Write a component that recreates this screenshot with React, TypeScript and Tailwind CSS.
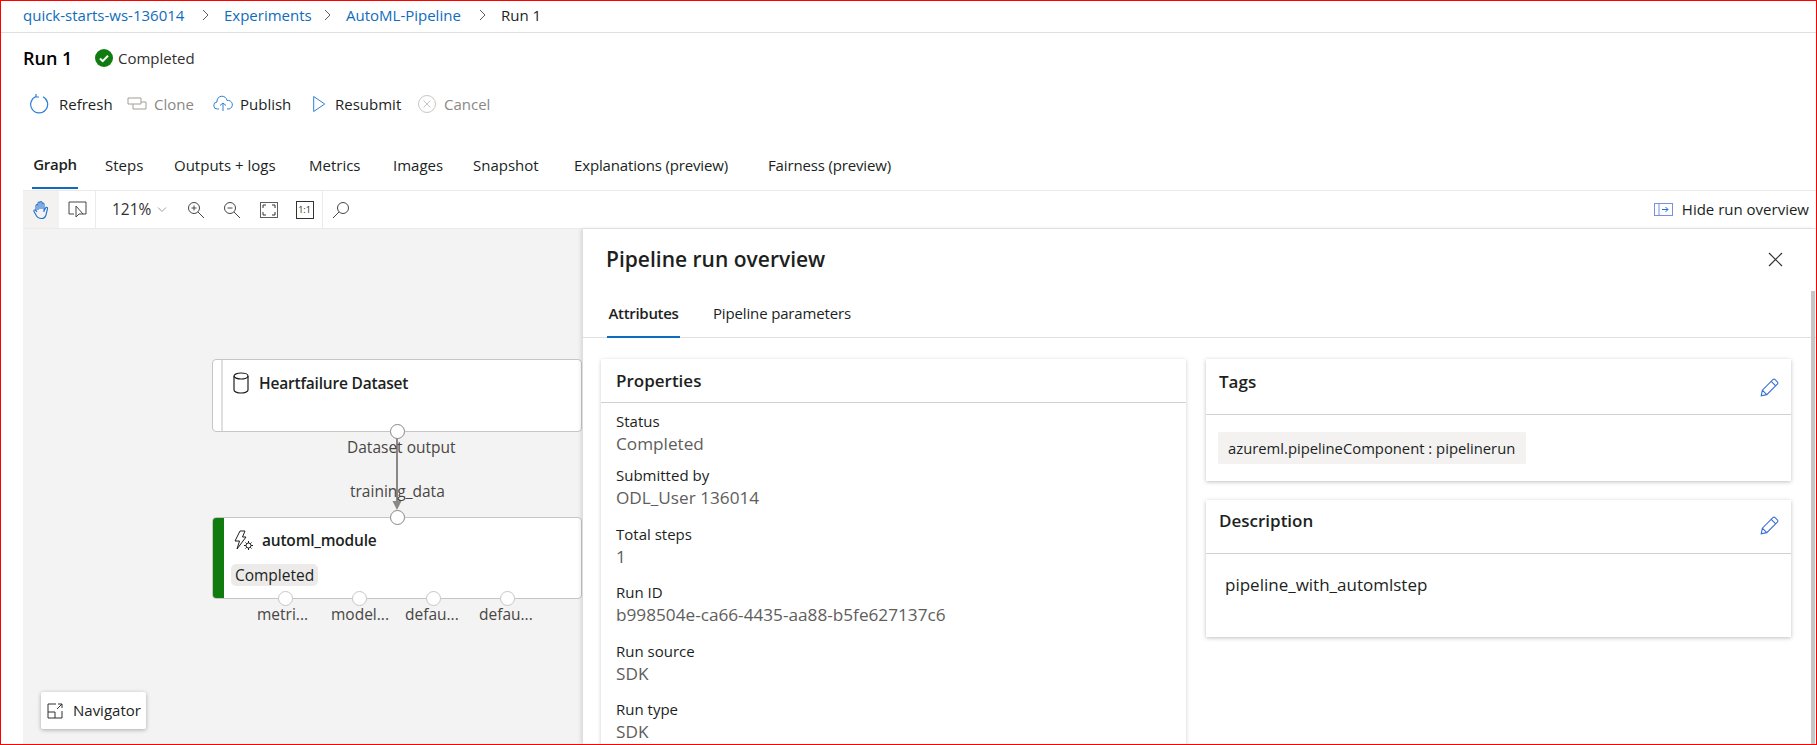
import React from "react";

const S = ({ w = 20, h = 20, vb = "0 0 20 20", c = "#0f6cbd", sw = 1, children, className = "" }: any) => (
  <svg width={w} height={h} viewBox={vb} fill="none" stroke={c} strokeWidth={sw} className={"shrink-0 " + className}>
    {children}
  </svg>
);

const Action = ({ icon, label, muted, gap, w }: any) => (
  <div className="flex items-center" style={{ width: w }}>
    <div className="w-[20px] flex justify-center">{icon}</div>
    <span style={{ marginLeft: gap }} className={"text-[15px] " + (muted ? "text-[#8a8886]" : "text-[#201f1e]")}>{label}</span>
  </div>
);

const Field = ({ label, value, first }: any) => (
  <div className={(first ? "h-[54px]" : "h-[58.5px]") + " flex flex-col"}>
    <div className="text-[15px] leading-[20px] font-medium text-[#201f1e]">{label}</div>
    <div className="mt-[1px] text-[17.2px] leading-[23px] text-[#605e5c]">{value}</div>
  </div>
);

const Pencil = () => (
  <S w={20} h={20} vb="0 0 18 18" c="#3a6fd8">
    <path d="M2 16l1-5L12.500 1.500a1.500 1.500 0 0 1 2 0l2 2a1.500 1.500 0 0 1 0 2L7 15l-5 1zM3 11l4 4M11 3l4 4" />
  </S>
);

const Port = ({ x, y, c = "#8a8886" }: any) => (
  <div
    className="absolute w-[15px] h-[15px] rounded-full bg-white border-[1.5px]"
    style={{ left: x - 7.5, top: y - 7.5, borderColor: c }}
  />
);

const OutLabel = ({ x, text }: any) => (
  <div className="absolute top-[376px] text-[15.5px] leading-[18px] text-[#484644]" style={{ left: x }}>
    {text}
  </div>
);

const Chevron = () => (
  <span className="w-[39px] flex justify-center">
    <S w={10} h={12} vb="0 0 10 12" c="#605e5c"><path d="M3 1l5 5-5 5" /></S>
  </span>
);

export default function App() {
  return (
    <div className="w-[1817px] h-[745px] overflow-hidden border border-[#ff0000] bg-white font-['Open_Sans',sans-serif] text-[#201f1e] flex flex-col relative">
      {/* breadcrumb */}
      <div className="h-[32px] shrink-0 border-b border-[#e1dfdd] pl-[22px] flex items-center text-[15px] leading-none pb-[3px] whitespace-nowrap">
        <span className="text-[#0f6cbd] w-[162px]">quick-starts-ws-136014</span>
        <Chevron />
        <span className="text-[#0f6cbd] w-[83px]">Experiments</span>
        <Chevron />
        <span className="text-[#0f6cbd] w-[116px]">AutoML-Pipeline</span>
        <Chevron />
        <span>Run 1</span>
      </div>

      {/* title */}
      <div className="h-[50px] shrink-0 pl-[22px] flex items-center">
        <span className="text-[18px] font-semibold text-black w-[72px]">Run 1</span>
        <svg width="18" height="18" viewBox="0 0 18 18" className="shrink-0">
          <circle cx="9" cy="9" r="9" fill="#107c10" />
          <path d="M5 9.500l2.700 2.700L13 6.800" fill="none" stroke="#fff" strokeWidth="2" />
        </svg>
        <span className="ml-[5px] text-[15px] text-[#323130]">Completed</span>
      </div>

      {/* actions */}
      <div className="h-[42px] shrink-0 pl-[29px] flex items-center">
        <Action
          w={97}
          gap={9}
          label="Refresh"
          icon={
            <S w={20} h={22} vb="0 0 20 22" c="#2f7fd8" sw={1.2}>
              <path d="M6 3.500a8.500 8.500 0 1 0 7 .3M6 1v3h3" />
            </S>
          }
        />
        <Action
          w={86}
          gap={7}
          muted
          label="Clone"
          icon={
            <S w={20} h={14} vb="0 0 20 14" c="#a19f9d">
              <path d="M1 1h13v6H1zM6 7v5h13V5h-5" />
            </S>
          }
        />
        <Action
          w={98}
          gap={7}
          label="Publish"
          icon={
            <S w={20} h={18} vb="0 0 20 18" c="#2f7fd8">
              <path d="M6 14H4.500a3.500 3.500 0 0 1-.5-7A5 5 0 0 1 14 5.500a4 4 0 0 1 2 8.500h-2M10 16V8M7 10.500L10 8l3 2.500" />
            </S>
          }
        />
        <Action
          w={106}
          gap={4}
          label="Resubmit"
          icon={
            <S w={20} h={18} vb="0 0 20 18" c="#2f7fd8">
              <path d="M2.700 1.500v15L13.700 9z" />
            </S>
          }
        />
        <Action
          gap={7}
          label="Cancel"
          muted
          icon={
            <S w={20} h={20} vb="0 0 20 20" c="#c8c6c4">
              <circle cx="10" cy="10" r="8.500" />
              <path d="M6.500 6.500l7 7M13.500 6.500l-7 7" />
            </S>
          }
        />
      </div>

      {/* tabs */}
      <div className="h-[64px] shrink-0 flex items-end pl-[31px] text-[15px] whitespace-nowrap">
        <div className="h-[44px] pb-[4px] w-[46px] border-b-2 border-[#0f6cbd] font-semibold flex items-center justify-center tracking-[-0.3px]">Graph</div>
        <div className="h-[44px] pb-[4px] ml-[27px] w-[40px] flex items-center">Steps</div>
        <div className="h-[44px] pb-[4px] ml-[29px] w-[106px] flex items-center">Outputs + logs</div>
        <div className="h-[44px] pb-[4px] ml-[29px] w-[54px] flex items-center">Metrics</div>
        <div className="h-[44px] pb-[4px] ml-[30px] w-[50px] flex items-center">Images</div>
        <div className="h-[44px] pb-[4px] ml-[30px] w-[66px] flex items-center">Snapshot</div>
        <div className="h-[44px] pb-[4px] ml-[35px] w-[156px] flex items-center tracking-[-0.15px]">Explanations (preview)</div>
        <div className="h-[44px] pb-[4px] ml-[38px] flex items-center tracking-[-0.15px]">Fairness (preview)</div>
      </div>

      {/* graph toolbar */}
      <div className="h-[39px] shrink-0 mt-[1px] ml-[22px] border-t border-b border-[#edebe9] flex items-center text-[15px]">
        <div className="w-[36px] h-full bg-[#f3f2f1] flex items-center justify-center">
          <S w={18} h={20} vb="0 0 18 20" c="#1f6fd0" sw={1.1}>
            <path d="M4 11V5.500a1 1 0 0 1 2 0V10M6 9V3a1 1 0 0 1 2 0v6M8 9V2.500a1 1 0 0 1 2 0V9M10 9V4a1 1 0 0 1 2 0v8M12 11l1.500-3a1 1 0 0 1 2 .6L14 15c-.6 2-2 3.500-4.500 3.500C6 18.500 5 17 4 15l-2-3.500a1 1 0 0 1 1.800-1L5 12" />
          </S>
        </div>
        <div className="w-[36px] flex justify-center">
          <S w={19} h={17} vb="0 0 19 17" c="#484644">
            <path d="M6 13H1V1h17v12h-3" />
            <path d="M8 5v11l3-3h4z" stroke="#484644" />
          </S>
        </div>
        <div className="h-full w-px bg-[#edebe9]" />
        <div className="h-full w-[66px] ml-[16px] flex items-center bg-white">
          <span className="w-[45px] text-[15.5px] text-[#323130]">121%</span>
          <S w={10} h={8} vb="0 0 10 8" c="#a19f9d"><path d="M1 1.500l4 4 4-4" /></S>
        </div>
        <div className="w-[36px] flex justify-center">
          <S w={18} h={18} vb="0 0 18 18" c="#484644">
            <circle cx="7" cy="7" r="5.500" />
            <path d="M11 11l6 6M4.500 7h5M7 4.500v5" />
          </S>
        </div>
        <div className="w-[36px] flex justify-center">
          <S w={18} h={18} vb="0 0 18 18" c="#484644">
            <circle cx="7" cy="7" r="5.500" />
            <path d="M11 11l6 6M4.500 7h5" />
          </S>
        </div>
        <div className="w-[37px] flex justify-center">
          <S w={18} h={16} vb="0 0 18 16" c="#323130">
            <rect x="0.500" y="0.500" width="17" height="15" stroke="#605e5c" />
            <path d="M3 6V3h3M12 3h3v3M15 10v3h-3M6 13H3v-3" />
          </S>
        </div>
        <div className="w-[35px] flex justify-center">
          <div className="w-[18px] h-[18px] border border-[#323130] text-[9px] leading-[16px] text-center">1:1</div>
        </div>
        <div className="h-full w-px bg-[#edebe9]" />
        <div className="ml-[9px]">
          <S w={18} h={18} vb="0 0 18 18" c="#484644">
            <circle cx="11" cy="7" r="5.500" />
            <path d="M7 11l-6 6" />
          </S>
        </div>
        <div className="ml-auto mr-[7px] flex items-center">
          <S w={19} h={13} vb="0 0 19 13" c="#7a8fe0">
            <rect x="0.500" y="0.500" width="18" height="12" />
            <path d="M5 0.500v12" />
            <path d="M8 6.500h6M11.500 4l2.500 2.500L11.500 9" stroke="#1f6fd0" />
          </S>
          <span className="ml-[9px]">Hide run overview</span>
        </div>
      </div>

      {/* body */}
      <div className="flex-1 min-h-0 flex ml-[22px]">
        {/* canvas */}
        <div className="w-[560px] shrink-0 bg-[#f3f3f3] relative overflow-hidden">
          <div className="absolute left-[189px] top-[130px] w-[370px] h-[73px] bg-white border border-[#c8c6c4] rounded-[4px] overflow-hidden flex">
            <div className="w-[10px] border-r-2 border-[#e1dfdd]" />
            <div className="ml-[9px] mt-[12px] flex items-start">
              <S w={18} h={22} vb="0 0 18 22" c="#201f1e" sw={1.2}>
                <ellipse cx="9" cy="4" rx="7" ry="3" />
                <path d="M2 4v14c0 1.600 3 3 7 3s7-1.400 7-3V4" />
              </S>
              <span className="ml-[9px] text-[15.5px] leading-[22px] font-semibold text-[#201f1e] tracking-[-0.2px]">Heartfailure Dataset</span>
            </div>
          </div>

          <svg className="absolute left-[367px] top-[202px]" width="14" height="90" viewBox="0 0 14 90" fill="none">
            <path d="M7 0v72" stroke="#8a8886" strokeWidth="2" />
            <path d="M2.500 70h9L7 79z" fill="#8a8886" />
          </svg>

          <Port x={374} y={202} />
          <div className="absolute left-[324px] top-[209px] text-[15.5px] leading-[18px] text-[#484644] whitespace-nowrap">Dataset output</div>
          <div className="absolute left-[327px] top-[253px] text-[15.5px] leading-[18px] text-[#484644] whitespace-nowrap">training_data</div>

          {/* automl node */}
          <div className="absolute left-[189px] top-[288px] w-[370px] h-[82px] bg-white border border-[#c8c6c4] rounded-[4px] overflow-hidden flex">
            <div className="w-[11px] h-full bg-[#107c10]" />
            <div className="ml-[7px] flex flex-col">
              <div className="flex items-center mt-[11px] ml-[3px]">
                <S w={19} h={21} vb="0 0 19 21" c="#201f1e">
                  <path d="M6 1h5L8.500 7H12L3 19l2.500-8H1z" />
                  <circle cx="14.500" cy="15.500" r="2.500" />
                  <path d="M14.500 11v2M14.500 18v2M10 15.500h2M17 15.500h2M11.500 12.500l1.200 1.200M16.300 17.300l1.200 1.200M17.500 12.500l-1.200 1.200M12.700 17.300l-1.200 1.200" />
                </S>
                <span className="ml-[9px] text-[15.5px] leading-[22px] font-semibold tracking-[-0.2px]">automl_module</span>
              </div>
              <div className="mt-[13px] w-[87px] h-[22px] rounded-[5px] bg-[#edebe9] text-[15.5px] leading-[22px] text-center whitespace-nowrap">Completed</div>
            </div>
          </div>
          <Port x={374} y={288} />
          <Port x={262} y={369} c="#c8c6c4" />
          <Port x={336} y={369} c="#c8c6c4" />
          <Port x={410} y={369} c="#c8c6c4" />
          <Port x={484} y={369} c="#c8c6c4" />
          <OutLabel x={234} text="metri..." />
          <OutLabel x={308} text="model..." />
          <OutLabel x={382} text="defau..." />
          <OutLabel x={456} text="defau..." />

          {/* navigator */}
          <div className="absolute left-[18px] top-[463px] w-[105px] h-[37px] bg-white rounded-[2px] shadow-[0_1px_4px_rgba(0,0,0,0.3)] flex items-center pl-[5px] text-[15px]">
            <S w={18} h={18} vb="0 0 18 18" c="#323130">
              <path d="M10 2H2v14h14V9M2 10h7v6M11 7l5-5M12 2h4v4" />
            </S>
            <span className="ml-[9px]">Navigator</span>
          </div>
        </div>

        {/* panel */}
        <div className="flex-1 min-w-0 relative overflow-hidden shadow-[-2px_0_4px_rgba(0,0,0,0.12)] bg-white">
          <div className="h-[61px] pl-[23px] pr-[33px] flex items-center justify-between">
            <span className="text-[21px] font-semibold text-[#201f1e]">Pipeline run overview</span>
            <S w={15} h={15} vb="0 0 15 15" c="#323130" sw={1.2}><path d="M1 1l13 13M14 1L1 14" /></S>
          </div>
          <div className="h-[48px] border-b border-[#e1dfdd] pl-[24px] flex items-end text-[15px]">
            <div className="h-[47px] w-[73px] -mb-px border-b-2 border-[#0f6cbd] font-semibold flex items-center justify-center tracking-[-0.3px]">Attributes</div>
            <div className="h-[47px] ml-[33px] flex items-center tracking-[-0.15px]">Pipeline parameters</div>
          </div>
          <div className="flex gap-[20px] pl-[18px] pt-[21px]">
            <div className="w-[585px] h-[480px] bg-white shadow-[0_1px_4px_rgba(0,0,0,0.2)] shrink-0">
              <div className="h-[44px] border-b border-[#d2d0ce] pl-[15px] flex items-center text-[17px] font-semibold">Properties</div>
              <div className="pl-[15px] pt-[8px]">
                <Field first label="Status" value="Completed" />
                <Field label="Submitted by" value="ODL_User 136014" />
                <Field label="Total steps" value="1" />
                <Field label="Run ID" value="b998504e-ca66-4435-aa88-b5fe627137c6" />
                <Field label="Run source" value="SDK" />
                <Field label="Run type" value="SDK" />
              </div>
            </div>
            <div className="w-[585px] shrink-0 flex flex-col gap-[19px]">
              <div className="h-[122px] bg-white shadow-[0_1px_4px_rgba(0,0,0,0.25)]">
                <div className="h-[56px] border-b border-[#d2d0ce] pl-[13px] pr-[12px] flex items-start justify-between">
                  <span className="text-[17px] font-semibold mt-[10px]">Tags</span>
                  <span className="mt-[19px]"><Pencil /></span>
                </div>
                <div className="pl-[12px] pt-[17px]">
                  <div className="inline-block h-[32px] w-[308px] pl-[10px] bg-[#f3f2f1] rounded-[2px] text-[14.8px] leading-[32px] whitespace-nowrap">azureml.pipelineComponent : pipelinerun</div>
                </div>
              </div>
              <div className="h-[137px] bg-white shadow-[0_1px_4px_rgba(0,0,0,0.25)]">
                <div className="h-[54px] border-b border-[#d2d0ce] pl-[13px] pr-[12px] flex items-start justify-between">
                  <span className="text-[17px] font-semibold mt-[8px]">Description</span>
                  <span className="mt-[16px]"><Pencil /></span>
                </div>
                <div className="pl-[19px] pt-[19px] text-[17px] leading-[24px]">pipeline_with_automlstep</div>
              </div>
            </div>
          </div>
          <div className="absolute right-[1px] top-[62px] bottom-0 w-[4px] bg-[#c8c6c4]" />
        </div>
      </div>
    </div>
  );
}
